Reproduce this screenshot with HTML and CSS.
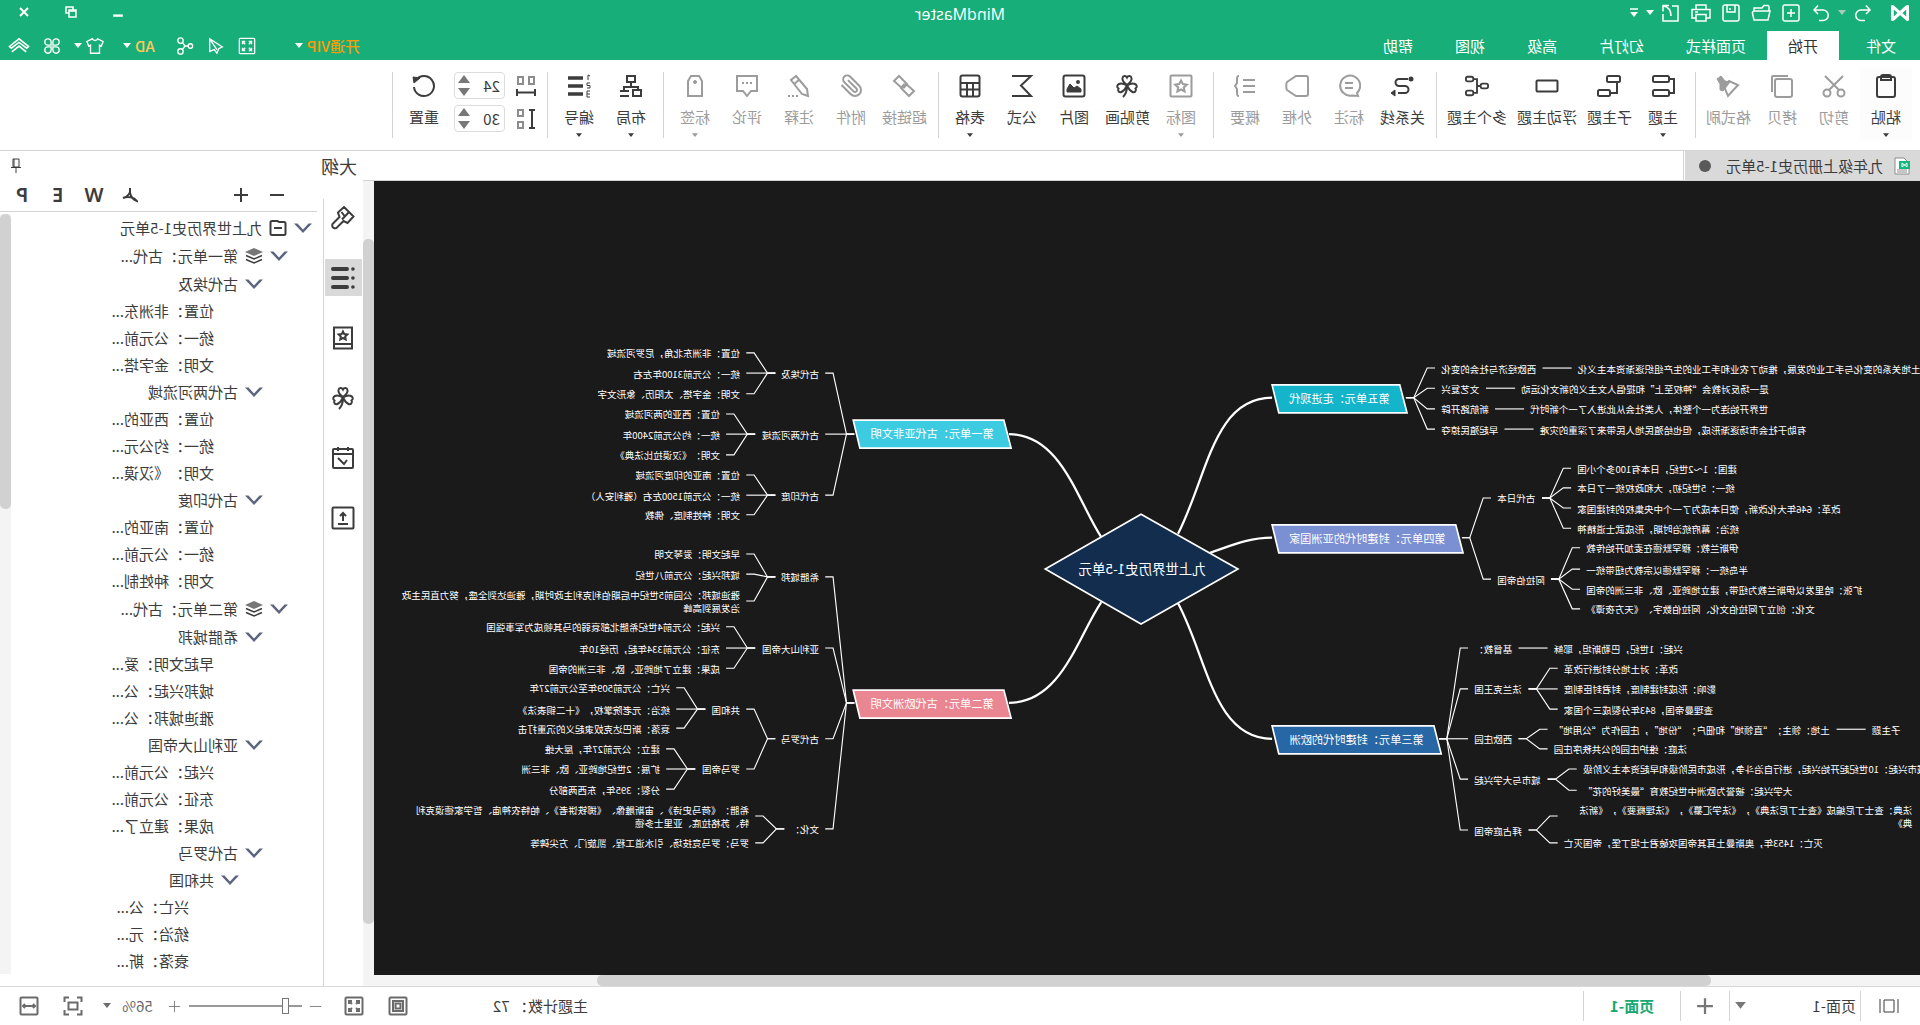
FILE: index.html
```html
<!DOCTYPE html>
<html lang="zh-CN">
<head>
<meta charset="utf-8">
<title>MindMaster</title>
<link rel="stylesheet" href="styles.css">
</head>
<body>
<svg class="sprite" aria-hidden="true">
  <symbol id="i-logo" viewBox="0 0 20 18"><path d="M1 2.500a1.500 1.500 0 0 1 2.500-1.200L10 7l6.500-5.700A1.500 1.500 0 0 1 19 2.500v13a1.500 1.500 0 0 1-2.500 1.200L10 11l-6.500 5.700A1.500 1.500 0 0 1 1 15.500z" fill="currentColor" stroke="none"/><path d="M3.800 5.500v7l3.800-3.500zM16.200 5.500v7l-3.800-3.500z" fill="#17ae79" stroke="none"/><path d="M3 2.500l14 13" stroke-width="3"/></symbol>
  <symbol id="i-undo" viewBox="0 0 20 20"><path d="M7 2.500L3 7l4 4M3.500 7H12a5 5 0 0 1 0 10.500H8"/></symbol>
  <symbol id="i-redo" viewBox="0 0 20 20"><path d="M13 2.500L17 7l-4 4M16.500 7H8a5 5 0 0 0 0 10.500h4"/></symbol>
  <symbol id="i-new" viewBox="0 0 20 20"><rect x="2" y="2" width="16" height="16" rx="2"/><path d="M10 6v8M6 10h8"/></symbol>
  <symbol id="i-open" viewBox="0 0 20 20"><path d="M2 8V4a1.500 1.500 0 0 1 1.500-1.500H7L9 5h8v3M1 8h15.500a2 2 0 0 1 2 2.500L17 17H3z"/></symbol>
  <symbol id="i-save" viewBox="0 0 20 20"><rect x="2" y="2" width="16" height="16" rx="2"/><path d="M6 2v7h8V2M11 5v2"/></symbol>
  <symbol id="i-print" viewBox="0 0 20 20"><path d="M5 6V2h10v4M5 15H1V6.500h18V15h-4M5 11.500h10V18H5zM13 9h3"/></symbol>
  <symbol id="i-export" viewBox="0 0 20 20"><path d="M9 3H3v15h15v-7M12 2.500h6v6M17.500 3C12 4 10 8 10 13"/></symbol>
  <symbol id="i-caret" viewBox="0 0 8 6"><path d="M0 0h8L4 5z" fill="currentColor" stroke="none"/></symbol>
  <symbol id="i-custom" viewBox="0 0 8 10"><path d="M0 1h8" /><path d="M0 4h8L4 9z" fill="currentColor" stroke="none"/></symbol>
  <symbol id="i-min" viewBox="0 0 10 10"><path d="M1 8h8" stroke-width="2"/></symbol>
  <symbol id="i-restore" viewBox="0 0 12 12"><path d="M4 4V1h7v6H8M1 4h7v7H1z"/><path d="M1 5h7"/></symbol>
  <symbol id="i-close" viewBox="0 0 12 12"><path d="M2 2l8 8M10 2l-8 8" stroke-width="2"/></symbol>
  <symbol id="i-full" viewBox="0 0 20 20"><rect x="1.500" y="1.500" width="17" height="17" rx="1"/><path d="M5 8V5h3M5 5l3 3M12 5h3v3M15 5l-3 3M5 12v3h3M5 15l3-3M15 12v3h-3M15 15l-3-3"/></symbol>
  <symbol id="i-send" viewBox="0 0 20 20"><path d="M17 2L3 11l4 2 2 5 3-4 5 2zM17 2L9 14"/></symbol>
  <symbol id="i-share" viewBox="0 0 20 20"><circle cx="4" cy="10" r="2.500"/><circle cx="15" cy="4" r="3"/><circle cx="15" cy="16" r="3"/><path d="M6.500 10H10l3-4M10 10l3 4"/></symbol>
  <symbol id="i-shirt" viewBox="0 0 20 20"><path d="M7 2L1 5l2 5 2-1v9h10V9l2 1 2-5-6-3c-1 2.500-5 2.500-6 0z"/></symbol>
  <symbol id="i-apps" viewBox="0 0 20 20"><path d="M9 9H5.500A3.500 3.500 0 1 1 9 5.500zM11 9h3.500A3.500 3.500 0 1 0 11 5.500zM9 11H5.500A3.500 3.500 0 1 0 9 14.500zM11 11h3.500A3.500 3.500 0 1 1 11 14.500z"/></symbol>
  <symbol id="i-up" viewBox="0 0 24 20"><path d="M1.500 10.500L12 2l10.500 8.500-2 2L12 6l-8.500 6.500zM4 16.500L12 10l8 6.500" stroke-width="1.800"/></symbol>

  <symbol id="i-paste" viewBox="0 0 24 24"><rect x="3" y="3" width="18" height="20" rx="2"/><path d="M7 3c0-1 1-2 2-2h6c1 0 2 1 2 2v3H7z"/></symbol>
  <symbol id="i-cut" viewBox="0 0 24 24"><circle cx="5" cy="19" r="3.500"/><circle cx="19" cy="19" r="3.500"/><path d="M3 2l14 14M21 2L7 16"/></symbol>
  <symbol id="i-copy" viewBox="0 0 24 24"><rect x="2" y="5" width="17" height="18" rx="2"/><path d="M6 2h15a1 1 0 0 1 1 1v15"/></symbol>
  <symbol id="i-brush" viewBox="0 0 24 24"><path d="M2 11l10 11 4-10-5-5z"/><path d="M10 8l5-1 4-5 4 3-3 5v6l-3 1z" fill="currentColor" stroke-width="1"/></symbol>
  <symbol id="i-topic" viewBox="0 0 24 24"><rect x="6" y="2" width="16" height="6" rx="1.500"/><rect x="6" y="16" width="16" height="6" rx="1.500"/><path d="M6 5H1v14h5"/></symbol>
  <symbol id="i-sub" viewBox="0 0 24 24"><rect x="1" y="2" width="13" height="6" rx="1.500"/><rect x="11" y="16" width="12" height="6" rx="1.500"/><path d="M4 8v11h7"/></symbol>
  <symbol id="i-float" viewBox="0 0 24 24"><rect x="1.500" y="6.500" width="21" height="11" rx="1"/></symbol>
  <symbol id="i-multi" viewBox="0 0 26 24"><rect x="1" y="9.500" width="8" height="5" rx="2"/><rect x="17" y="2" width="8" height="5" rx="2"/><rect x="17" y="17" width="8" height="5" rx="2"/><path d="M9 12h4M17 4.500h-4v15h4"/></symbol>
  <symbol id="i-rel" viewBox="0 0 24 24"><circle cx="3" cy="5" r="1.500" fill="currentColor"/><path d="M18 5H9a3.500 3.500 0 0 0 0 7h6a3.500 3.500 0 0 1 0 7H8" transform="translate(24 0) scale(-1 1)"/><path d="M19 16l4 3-4 3z" fill="currentColor" stroke-width="1"/></symbol>
  <symbol id="i-call" viewBox="0 0 24 24"><path d="M4 19a10 10 0 1 1 5 2.500L3 22z"/><path d="M8 9h8M8 14h8"/></symbol>
  <symbol id="i-frame" viewBox="0 0 24 24"><path d="M3 2h10l9 6c1 1 1 7 0 8l-9 6H3a2 2 0 0 1-2-2V4a2 2 0 0 1 2-2z"/></symbol>
  <symbol id="i-brace" viewBox="0 0 24 24"><path d="M2 6h12M2 12h12M2 18h12M18 2c2 0 2 1 2 3v4l2 3-2 3v4c0 2 0 3-2 3"/></symbol>
  <symbol id="i-mark" viewBox="0 0 24 24"><rect x="1.500" y="1.500" width="21" height="21" rx="1"/><path d="M12 6.500l1.800 3.500 4 .6-3 2.800.8 4-3.600-1.900-3.600 1.900.8-4-3-2.800 4-.6z"/></symbol>
  <symbol id="i-clover" viewBox="0 0 24 24"><path d="M12 11C8 8 7 6 7.500 4 8 1.500 11 1.500 12 3.500c1-2 4-2 4.500.5.500 2-.500 4-4.500 7zM12 11.500c-4-2.500-6-2.500-8-1.500s-2.500 3-.5 4.500C2 17 4.500 19 6.500 18s4-3 5.500-6.500zM12 11.500c4-2.500 6-2.500 8-1.500s2.500 3 .5 4.500C22 17 19.500 19 17.500 18s-4-3-5.500-6.500zM12 12c0 4 1 8 4 11"/></symbol>
  <symbol id="i-image" viewBox="0 0 24 24"><rect x="1.500" y="1.500" width="21" height="21" rx="2"/><path d="M5 18v-3l4-3 3 2 4-4 3 5v3z" fill="currentColor" stroke-width="1"/><circle cx="8" cy="8" r="1" fill="currentColor"/></symbol>
  <symbol id="i-sigma" viewBox="0 0 24 24"><path d="M22 2H3l10 9.500L3 22h19"/></symbol>
  <symbol id="i-table" viewBox="0 0 24 24"><rect x="2.500" y="1.500" width="19" height="21" rx="2"/><path d="M3 9h18M3 15.500h18M9 9v13M15 9v13"/></symbol>
  <symbol id="i-link" viewBox="0 0 24 24"><path d="M13 15l9-8-5-5-8 8 3.500 4M11 9l-9 8 5 5 8-8-3.500-4"/></symbol>
  <symbol id="i-clip" viewBox="0 0 24 24"><path d="M21.440 11.050l-9.190 9.190a6 6 0 0 1-8.490-8.490l9.190-9.190a4 4 0 0 1 5.660 5.660l-9.200 9.190a2 2 0 0 1-2.830-2.830l8.490-8.480"/></symbol>
  <symbol id="i-note" viewBox="0 0 24 24"><path d="M15 2l5 4L9 20l-6 2 1-7zM12 6l5 4" /><path d="M13 22h2M17 22h2M21 22h2"/></symbol>
  <symbol id="i-comment" viewBox="0 0 24 24"><path d="M2 2h20v15h-6l-4 5-4-5H2zM7 9h2M11 9h2M15 9h2"/></symbol>
  <symbol id="i-tag" viewBox="0 0 24 24"><path d="M5 22V7l3-5h8l3 5v15z"/><circle cx="12" cy="8" r="1.500" fill="currentColor" stroke-width="1"/></symbol>
  <symbol id="i-layout" viewBox="0 0 24 24"><path d="M8 2h8v6H8zM12 8v5M5 16v-3h14v3M2 16h8v6H2zM14 17h9M14 22h9"/></symbol>
  <symbol id="i-number" viewBox="0 0 24 24"><path d="M8 4h15M8 12h15M8 20h15" stroke-width="3.500"/><path d="M1 2l2-1v5M1 9h3v2.500H1V14h3M1 17h3v6H1M1 20h3" stroke-width="1"/></symbol>
  <symbol id="i-hgap" viewBox="0 0 20 22"><path d="M2 2h5v7H2zM13 2h5v7h-5z" stroke="#8c8c8c"/><path d="M1 14v7M19 14v7M1 17.500h18"/></symbol>
  <symbol id="i-vgap" viewBox="0 0 20 22"><path d="M13 2h5v6h-5zM13 14h5v6h-5z" stroke="#8c8c8c"/><path d="M1 2h6M1 20h6M4 2v18"/></symbol>
  <symbol id="i-reset" viewBox="0 0 24 24"><path d="M4 6a10 10 0 1 1-2 7" transform="translate(24 0) scale(-1 1)"/><path d="M16 4l7-1-1 6z" fill="currentColor" stroke-width="1"/></symbol>

  <symbol id="i-doc" viewBox="0 0 16 18"><path d="M6 1h9v16H1V6z" fill="#fff" stroke="#8c8c8c"/><path d="M3 13h10M3 15h10" stroke="#8c8c8c"/><rect x="0" y="4" width="11" height="8" fill="#10b87c" stroke="none"/><path d="M3 10V6l5 4V6z" stroke="#fff"/></symbol>
  <symbol id="i-pin" viewBox="0 0 12 16"><path d="M3 1h6v8H3zM1 9.500h10M6 10v5M8 1v8"/></symbol>
  <symbol id="i-paint" viewBox="0 0 24 24"><path d="M11 1L1.500 10.500l6 6.500 4-2 7 7c3 1 5-1 4-4l-7-7 1.500-4.500zM6 6l7 7.500M10.500 10l3-4"/></symbol>
  <symbol id="i-list" viewBox="0 0 24 24"><path d="M8 3h14M8 12h14M8 21h14" stroke-width="4" stroke-linecap="round"/><path d="M2 3h.1M2 12h.1M2 21h.1" stroke-width="3.500" stroke-linecap="round"/></symbol>
  <symbol id="i-book" viewBox="0 0 24 24"><path d="M3 1.500h18v21H3zM3 18h18"/><path d="M12 5.500l1.300 2.600 3 .4-2.100 2 .5 2.900-2.700-1.400-2.700 1.400.5-2.900-2.100-2 3-.4z"/></symbol>
  <symbol id="i-calendar" viewBox="0 0 24 24"><rect x="2" y="3" width="20" height="19" rx="1"/><path d="M2 8h20M7 1v4M17 1v4M17 12l-6 6-3-4"/></symbol>
  <symbol id="i-upload" viewBox="0 0 24 24"><rect x="1.500" y="1.500" width="21" height="21" rx="1"/><path d="M7 18h10M12 15V8M9 10l3-3 3 3"/></symbol>
  <symbol id="i-minus" viewBox="0 0 16 16"><path d="M1 8h14"/></symbol>
  <symbol id="i-plus" viewBox="0 0 16 16"><path d="M1 8h14M8 1v14"/></symbol>
  <symbol id="i-pdf" viewBox="0 0 16 16"><path d="M8 1v5c-1 4-4 7-7 8 3-4 9-5 14-3-3-1-6-3-7-6"/></symbol>
  <symbol id="i-chev" viewBox="0 0 18 12"><path d="M0 1.500h3.500L9 7.500l5.500-6H18L9 11z" fill="#5c6580" stroke="none"/></symbol>
  <symbol id="i-folder" viewBox="0 0 18 16"><path d="M1.500 3.500c0-1 .5-1.500 1.500-1.500h5l1.500-1H15c1 0 1.500.5 1.500 1.500v11c0 1-.5 1.500-1.500 1.500H3c-1 0-1.500-.5-1.500-1.500zM5 8h8"/></symbol>
  <symbol id="i-layers" viewBox="0 0 18 16"><path d="M9 0l9 4-9 4-9-4z" fill="#777" stroke="none"/><path d="M1 7.500L9 11l8-3.500M1 11.500L9 15l8-3.500" stroke-width="1.500"/></symbol>

  <symbol id="i-panel" viewBox="0 0 20 14"><path d="M1 0v14M5 1h10v12H5zM19 0v14"/></symbol>
  <symbol id="i-page" viewBox="0 0 20 20"><rect x="1.500" y="1.500" width="17" height="17" rx="1"/><path d="M5 5h10v10H5zM7.500 7.500h5v5h-5z"/></symbol>
  <symbol id="i-focus" viewBox="0 0 20 20"><path d="M1.500 6V1.500H6M14 1.500h4.500V6M18.500 14v4.500H14M6 18.500H1.500V14M5.500 6.500h9v7h-9z"/></symbol>
  <symbol id="i-fitw" viewBox="0 0 20 20"><rect x="1.500" y="1.500" width="17" height="17" rx="1"/><path d="M4 10h12M6 8l-2 2 2 2M14 8l2 2-2 2"/></symbol>
</svg>

<div class="app">
  <header class="top">
    <div class="titlebar">
      <div class="quick">
        <svg class="logo"><use href="#i-logo"/></svg>
        <button class="tb" aria-label="撤销"><svg><use href="#i-undo"/></svg></button>
        <button class="tb dim" aria-label="撤销列表"><svg class="caret"><use href="#i-caret"/></svg></button>
        <button class="tb" aria-label="重做"><svg><use href="#i-redo"/></svg></button>
        <button class="tb" aria-label="新建"><svg><use href="#i-new"/></svg></button>
        <button class="tb" aria-label="打开"><svg><use href="#i-open"/></svg></button>
        <button class="tb" aria-label="保存"><svg><use href="#i-save"/></svg></button>
        <button class="tb" aria-label="打印"><svg><use href="#i-print"/></svg></button>
        <button class="tb" aria-label="导出"><svg><use href="#i-export"/></svg></button>
        <button class="tb" aria-label="导出列表"><svg class="caret"><use href="#i-caret"/></svg></button>
        <button class="tb" aria-label="自定义"><svg class="custom"><use href="#i-custom"/></svg></button>
      </div>
      <h1 class="title">MindMaster</h1>
      <div class="window">
        <button aria-label="最小化"><svg><use href="#i-min"/></svg></button>
        <button aria-label="还原"><svg><use href="#i-restore"/></svg></button>
        <button aria-label="关闭"><svg><use href="#i-close"/></svg></button>
      </div>
    </div>
    <nav class="menubar">
      <a class="menu file" href="#">文件</a>
      <a class="menu on" href="#">开始</a>
      <a class="menu" href="#">页面样式</a>
      <a class="menu" href="#">幻灯片</a>
      <a class="menu" href="#">高级</a>
      <a class="menu" href="#">视图</a>
      <a class="menu" href="#">帮助</a>
      <div class="account">
        <button class="vip">开通VIP<svg class="caret white"><use href="#i-caret"/></svg></button>
        <button aria-label="全屏"><svg><use href="#i-full"/></svg></button>
        <button aria-label="发送"><svg><use href="#i-send"/></svg></button>
        <button aria-label="分享"><svg><use href="#i-share"/></svg></button>
        <button class="user">AD<svg class="caret white"><use href="#i-caret"/></svg></button>
        <button class="skin" aria-label="皮肤"><svg><use href="#i-shirt"/></svg><svg class="caret"><use href="#i-caret"/></svg></button>
        <button aria-label="应用"><svg><use href="#i-apps"/></svg></button>
        <button aria-label="收起"><svg class="wide"><use href="#i-up"/></svg></button>
      </div>
    </nav>
  </header>

  <div class="ribbon">
    <div class="group">
      <button class="cmd hot"><svg><use href="#i-paste"/></svg>粘贴<svg class="drop"><use href="#i-caret"/></svg></button>
      <button class="cmd off"><svg><use href="#i-cut"/></svg>剪切</button>
      <button class="cmd off"><svg><use href="#i-copy"/></svg>拷贝</button>
      <button class="cmd off"><svg><use href="#i-brush"/></svg>格式刷</button>
    </div>
    <div class="group">
      <button class="cmd"><svg><use href="#i-topic"/></svg>主题<svg class="drop"><use href="#i-caret"/></svg></button>
      <button class="cmd"><svg><use href="#i-sub"/></svg>子主题</button>
      <button class="cmd"><svg><use href="#i-float"/></svg>浮动主题</button>
      <button class="cmd"><svg><use href="#i-multi"/></svg>多个主题</button>
    </div>
    <div class="group">
      <button class="cmd"><svg><use href="#i-rel"/></svg>关系线</button>
      <button class="cmd off"><svg><use href="#i-call"/></svg>标注</button>
      <button class="cmd off"><svg><use href="#i-frame"/></svg>外框</button>
      <button class="cmd off"><svg><use href="#i-brace"/></svg>概要</button>
    </div>
    <div class="group">
      <button class="cmd off"><svg><use href="#i-mark"/></svg>图标<svg class="drop"><use href="#i-caret"/></svg></button>
      <button class="cmd"><svg><use href="#i-clover"/></svg>剪贴画</button>
      <button class="cmd"><svg><use href="#i-image"/></svg>图片</button>
      <button class="cmd"><svg><use href="#i-sigma"/></svg>公式</button>
      <button class="cmd"><svg><use href="#i-table"/></svg>表格<svg class="drop"><use href="#i-caret"/></svg></button>
    </div>
    <div class="group">
      <button class="cmd off"><svg><use href="#i-link"/></svg>超链接</button>
      <button class="cmd off"><svg><use href="#i-clip"/></svg>附件</button>
      <button class="cmd off"><svg><use href="#i-note"/></svg>注释</button>
      <button class="cmd off"><svg><use href="#i-comment"/></svg>评论</button>
      <button class="cmd off"><svg><use href="#i-tag"/></svg>标签<svg class="drop"><use href="#i-caret"/></svg></button>
    </div>
    <div class="group">
      <button class="cmd"><svg><use href="#i-layout"/></svg>布局<svg class="drop"><use href="#i-caret"/></svg></button>
      <button class="cmd"><svg><use href="#i-number"/></svg>编号<svg class="drop"><use href="#i-caret"/></svg></button>
    </div>
    <div class="group">
      <div class="gaps">
        <label class="gap"><svg><use href="#i-hgap"/></svg><span class="spin"><input type="text" value="24" aria-label="水平间距"><span class="arrows"><i class="up"></i><i class="down"></i></span></span></label>
        <label class="gap"><svg><use href="#i-vgap"/></svg><span class="spin"><input type="text" value="30" aria-label="垂直间距"><span class="arrows"><i class="up"></i><i class="down"></i></span></span></label>
      </div>
      <button class="cmd"><svg><use href="#i-reset"/></svg>重置</button>
    </div>
  </div>

  <main class="work">
    <section class="editor">
      <div class="tabs">
        <button class="doc"><svg><use href="#i-doc"/></svg>九年级上册历史1-5单元<span class="dot"></span></button>
      </div>
      <div class="stage">
        <div class="canvas"><svg id="map" width="1546" height="794"></svg></div>
        <div class="vbar"><div class="thumb"></div></div>
      </div>
      <div class="hbar"><div class="thumb"></div></div>
    </section>
    <aside class="side">
      <div class="sidehead"><h2>大纲</h2><button aria-label="固定"><svg><use href="#i-pin"/></svg></button></div>
      <div class="sidebody">
        <div class="rail">
          <button aria-label="样式"><svg><use href="#i-paint"/></svg></button>
          <button class="on" aria-label="大纲"><svg><use href="#i-list"/></svg></button>
          <button aria-label="图标"><svg><use href="#i-book"/></svg></button>
          <button aria-label="剪贴画"><svg><use href="#i-clover"/></svg></button>
          <button aria-label="任务"><svg><use href="#i-calendar"/></svg></button>
          <button aria-label="导出"><svg><use href="#i-upload"/></svg></button>
        </div>
        <div class="outline">
          <div class="tools">
            <button aria-label="折叠"><svg><use href="#i-minus"/></svg></button>
            <button aria-label="展开"><svg><use href="#i-plus"/></svg></button>
            <button class="push" aria-label="导出 PDF"><svg><use href="#i-pdf"/></svg></button>
            <button>W</button>
            <button>E</button>
            <button>P</button>
          </div>
          <div class="treewrap">
            <ul class="tree">
              <li class="l1"><svg class="chev"><use href="#i-chev"/></svg><svg class="kind"><use href="#i-folder"/></svg>九上世界历史1-5单元</li>
              <li class="l2"><svg class="chev"><use href="#i-chev"/></svg><svg class="kind"><use href="#i-layers"/></svg>第一单元：古代...</li>
              <li class="l3"><svg class="chev"><use href="#i-chev"/></svg>古代埃及</li>
              <li class="l4">位置：非洲东...</li>
              <li class="l4">统一：公元前...</li>
              <li class="l4">文明：金字塔...</li>
              <li class="l3"><svg class="chev"><use href="#i-chev"/></svg>古代两河流域</li>
              <li class="l4">位置：西亚的...</li>
              <li class="l4">统一：约公元...</li>
              <li class="l4">文明：《汉谟...</li>
              <li class="l3"><svg class="chev"><use href="#i-chev"/></svg>古代印度</li>
              <li class="l4">位置：南亚的...</li>
              <li class="l4">统一：公元前...</li>
              <li class="l4">文明：种姓制...</li>
              <li class="l2"><svg class="chev"><use href="#i-chev"/></svg><svg class="kind"><use href="#i-layers"/></svg>第二单元：古代...</li>
              <li class="l3"><svg class="chev"><use href="#i-chev"/></svg>希腊城邦</li>
              <li class="l4">早起文明：爱...</li>
              <li class="l4">城邦兴起：公...</li>
              <li class="l4">雅迪城邦：公...</li>
              <li class="l3"><svg class="chev"><use href="#i-chev"/></svg>亚利山大帝国</li>
              <li class="l4">兴起：公元前...</li>
              <li class="l4">东征：公元前...</li>
              <li class="l4">成果：建立了...</li>
              <li class="l3"><svg class="chev"><use href="#i-chev"/></svg>古代罗马</li>
              <li class="l4 open"><svg class="chev"><use href="#i-chev"/></svg>共和国</li>
              <li class="l5">兴亡：公...</li>
              <li class="l5">统治：元...</li>
              <li class="l5">衰落：斯...</li>
            </ul>
            <div class="treebar"><div class="thumb"></div></div>
          </div>
        </div>
      </div>
    </aside>
  </main>

  <footer class="status">
    <button class="panel" aria-label="页面面板"><svg><use href="#i-panel"/></svg></button>
    <select class="pages" aria-label="页面"><option>页面-1</option></select>
    <svg class="pick"><use href="#i-caret"/></svg>
    <button class="add" aria-label="添加页面"><svg><use href="#i-plus"/></svg></button>
    <button class="current">页面-1</button>
    <span class="count">主题计数：&nbsp;72</span>
    <div class="view">
      <button aria-label="整页"><svg><use href="#i-page"/></svg></button>
      <button aria-label="全屏"><svg><use href="#i-full"/></svg></button>
      <button class="step" aria-label="缩小"><svg><use href="#i-minus"/></svg></button>
      <input class="zoom" type="range" min="0" max="100" value="12" aria-label="缩放">
      <button class="step in" aria-label="放大"><svg><use href="#i-plus"/></svg></button>
      <button class="percent">56%<svg class="caret"><use href="#i-caret"/></svg></button>
      <button aria-label="聚焦"><svg><use href="#i-focus"/></svg></button>
      <button aria-label="适合宽度"><svg><use href="#i-fitw"/></svg></button>
    </div>
  </footer>
</div>
<script src="map.js"></script>
</body>
</html>
```
FILE: map.js
```js
// Draws the mind map. Positions are view pixels; the drawing itself is in
// document units, shown at the current zoom.
const ZOOM = 0.56;
const TOP = 181;
const NS = 'http://www.w3.org/2000/svg';
const doc = v => Math.round(v / ZOOM);
const docY = v => Math.round((v - TOP) / ZOOM);

const root = document.createElementNS(NS, 'g');
root.setAttribute('transform', `scale(${ZOOM})`);
document.getElementById('map').append(root);

function add(tag, attrs, text) {
  const el = document.createElementNS(NS, tag);
  for (const k in attrs) el.setAttribute(k, attrs[k]);
  if (text) el.textContent = text;
  root.append(el);
}

function label(x, y, text, cls) {
  add('text', { x: doc(x), y: docY(y) + 8, class: cls }, text);
}

// node: [y, text, x of the children, children]
function branch(side, parentY, x, nodes) {
  const at = n => doc(x) - side * n;
  nodes.forEach(([y, text, childX, children]) => {
    const py = docY(parentY), cy = docY(y);
    add('path', { class: 'twig', d: `M${at(63)} ${py}H${at(49)}L${at(25)} ${cy}H${at(11)}` });
    const cls = 'leaf ' + (side < 0 ? 'end' : 'start');
    const lines = text.split('\n');
    if (lines.length === 1) label(x, y, text, cls);
    else lines.forEach((line, i) =>
      label(side < 0 ? x - 348 : x, y - 6 + i * 13, line, 'leaf start'));
    if (children) branch(side, y, childX, children);
  });
}

function curve(d) {
  const p = d.map(([x, y]) => `${doc(x)} ${docY(y)}`);
  add('path', { class: 'limb', d: `M${p[0]}C${p[1]} ${p[2]} ${p[3]}` });
}

function unit(left, right, top, color, text) {
  const pts = [[left + 7, top], [right, top], [right - 7, top + 28], [left, top + 28]];
  add('polygon', { class: 'box', fill: color, points: pts.map(([x, y]) => `${doc(x)},${docY(y)}`).join(' ') });
  add('text', { class: 'unit', x: doc((left + right) / 2), y: docY(top + 14) + 7 }, text);
}

curve([[742, 534], [713, 477], [707, 398], [648, 398]]);
curve([[710, 553], [690, 546], [672, 538], [648, 538]]);
curve([[742, 603], [713, 657], [707, 739], [648, 739]]);
curve([[819, 537], [843, 500], [859, 434], [911, 434]]);
curve([[819, 602], [843, 638], [859, 703], [911, 703]]);

add('polygon', { class: 'box', fill: '#132d4f', points: [[682, 569], [779, 514], [875, 569], [779, 624]].map(([x, y]) => `${doc(x)},${docY(y)}`).join(' ') });
add('text', { class: 'center', x: doc(778), y: docY(569) + 9 }, '九上世界历史1-5单元');

unit(513, 648, 385, '#14b4cb', '第五单元：走进现代');
unit(457, 648, 525, '#7b8fd3', '第四单元：封建时代的亚洲国家');
unit(479, 648, 726, '#2767a6', '第三单元：封建时代的欧洲');
unit(909, 1067, 420, '#3dcbe1', '第一单元：古代亚非文明');
unit(909, 1067, 690, '#ea8592', '第二单元：古代欧洲文明');

branch(-1, 398, 479, [
  [368, '西欧经济与社会的变化', 342, [[368, '土地关系的变化与手工业的发展，推动了农业和手工业的生产组织逐渐资本主义化']]],
  [388, '文艺复兴', 399, [[388, '是一场反对教会“神权至上”和提倡人文主义的新文化运动']]],
  [409, '新航路开辟', 390, [[409, '世界开始连为一个整体，人类社会从此进入了一个新时代']]],
  [429, '早起殖民掠夺', 380, [[429, '有助于社会市场逐渐形成，但也给殖民地人民带来了深重的灾难']]]
]);
branch(-1, 538, 423, [
  [498, '古代日本', 343, [
    [468, '建国：1～2世纪，日本有100多个小国'],
    [488, '统一：5世纪初，大和政权统一了日本'],
    [508, '改革：646年大化改新，使日本成为了一个中央集权的封建国家'],
    [528, '统治：幕府统治时期，形成武士道精神']]],
  [579, '阿拉伯帝国', 334, [
    [548, '伊斯兰教：穆罕默德在麦加开始传教'],
    [569, '半岛统一：穆罕默德以宗教为纽带统一'],
    [589, '扩张：哈里发以伊斯兰教为纽带，建立地跨亚、欧、非三洲的帝国'],
    [609, '文化：创立了阿拉伯文化、阿拉伯数字、《天方夜谭》']]]
]);
branch(-1, 739, 446, [
  [648, '基督教：', 366, [[648, '兴起：1世纪，巴勒斯坦，耶稣']]],
  [689, '法兰克王国', 356, [
    [668, '改革：对土地分封进行改革'],
    [689, '影响：形成封建制度，封君封臣制度'],
    [709, '查理曼帝国，843年分裂成三个国家']]],
  [739, '西欧庄园', 366, [
    [729, '土地：领主；“直领地”和佃户；“份地”，庄园作为“公用地”', 48, [[729, '子主题']]],
    [749, '法庭：维护庄园的公共秩序庄园']]],
  [779, '城市与大学兴起', 337, [
    [769, '城市兴起：10世纪起开始兴起，进行自治斗争，形成市民阶级和早起资本主义阶级'],
    [790, '大学兴起：被誉为欧洲中世纪教育“最美好的花”']]],
  [830, '拜占庭帝国', 356, [
    [816, '法典：查士丁尼编成《查士丁尼法典》，《法学汇纂》，《法理概要》，《新法\n典》'],
    [843, '灭亡：1453年，奥斯曼土耳其帝国攻破君士坦丁堡，帝国灭亡']]]
]);
branch(1, 434, 1101, [
  [373, '古代埃及', 1180, [
    [353, '位置：非洲东北角，尼罗河流域'],
    [373, '统一：公元前3100年左右'],
    [394, '文明：金字塔、太阳历、象形文字']]],
  [434, '古代两河流域', 1200, [
    [414, '位置：西亚的两河流域'],
    [434, '统一：约公元前2400年'],
    [455, '文明：《汉谟拉比法典》']]],
  [495, '古代印度', 1180, [
    [475, '位置：南亚的印度河流域'],
    [495, '统一：公元前1500左右（雅利安人）'],
    [515, '文明：种姓制度、佛教']]]
]);
branch(1, 703, 1101, [
  [577, '希腊城邦', 1180, [
    [554, '早起文明：爱琴文明'],
    [574, '城邦兴起：公元前八世纪'],
    [601, '雅迪城邦：公园前5世纪中后期伯利克利主政时期，雅迪达到全盛，努力直民主政\n治发展到高峰']]],
  [648, '亚利山大帝国', 1200, [
    [627, '兴起：公元前4世纪希腊北部衰弱的马其顿成为军事强国'],
    [648, '东征：公元前334年起，历经10年'],
    [668, '成果：建立了地跨亚、欧、非三洲的帝国']]],
  [739, '古代罗马', 1180, [
    [709, '共和国', 1250, [
      [688, '兴亡：公元前509年至公元前27年'],
      [709, '统治：元老院掌权，《十二铜表法》'],
      [728, '衰落：斯巴达克奴隶起义的沉重打击']]],
    [769, '罗马帝国', 1260, [
      [749, '建立：公元前27年，屋大维'],
      [769, '扩展：2世纪地跨亚、欧、非三洲'],
      [789, '分裂：395年，东西两部分']]]]],
  [829, '文化：', 1171, [
    [816, '希腊：《荷马史诗》、宙斯雕像、《掷铁饼者》、帕特农神庙、哲学家德谟克利\n特、苏格拉底、亚里士多德'],
    [843, '罗马：罗马竞技场、引水道工程、凯旋门、方尖碑等']]]
]);
```
FILE: styles.css
```css
* { box-sizing: border-box; }

body {
  margin: 0;
  font: 15px/20px "Noto Sans CJK SC", "Noto Sans", sans-serif;
  text-spacing-trim: space-all;
  color: #3c3c3c;
  overflow: hidden;
}

.sprite { display: none; }

button, select, input { font: inherit; color: inherit; }
button { border: 0; padding: 0; background: none; display: flex; align-items: center; justify-content: center; }
svg { display: block; flex: none; fill: none; stroke: currentColor; }

/* The whole interface is shown mirrored, right to left. */
.app {
  height: 100vh;
  display: flex;
  flex-direction: column;
  background: #fff;
  transform: scaleX(-1);
}

/* title bar */
.top { background: #17ae79; color: #fff; }
.titlebar { height: 31px; display: grid; grid-template-columns: 1fr auto 1fr; align-items: center; }
.quick { display: flex; align-items: center; padding: 0 0 6px 10px; }
.logo { width: 20px; height: 18px; margin-right: 12px; }
.tb { width: 30px; height: 20px; }
.tb svg { width: 20px; height: 20px; stroke-width: 1.5; }
.tb .caret, .caret { width: 8px; height: 6px; }
.tb .custom { width: 8px; height: 10px; }
.tb:has(.caret) { width: 12px; }
.tb:has(.custom) { width: 20px; }
.dim { color: #a9c9b9; }
.title { margin: 0; font: 16px/22px "Open Sans", sans-serif; padding-bottom: 4px; }
.window { justify-self: end; display: flex; padding: 0 18px 8px 0; gap: 35px; }
.window button { width: 12px; height: 12px; }
.window svg { width: 12px; height: 12px; stroke-width: 1.5; }

/* menu tabs */
.menubar { height: 29px; display: flex; }
.menu { padding: 5px 21px 4px; color: #fff; text-decoration: none; }
.menu.file { padding-left: 24px; padding-right: 27px; }
.menu.on { background: #fff; color: #333; }
.account { margin-left: auto; display: flex; align-items: center; gap: 13px; padding-right: 8px; }
.account svg { width: 18px; height: 18px; stroke-width: 1.5; }
.account .wide { width: 22px; }
.account .caret { width: 8px; height: 6px; margin-left: 4px; }
.account .white { color: #fff; }
.vip { color: #ff9a05; font-weight: 500; margin-right: 26px; }
.user { color: #ffc75c; font-weight: 500; margin-left: 8px; }
.skin { margin-left: 6px; }

/* ribbon */
.ribbon { height: 91px; display: flex; padding: 8px 0 0 8px; border-bottom: 1px solid #d4d4d4; }
.group { display: flex; height: 72px; position: relative; padding-right: 6px; margin-right: 6px; }
.group::after { content: ""; width: 1px; height: 66px; background: #d4d4d4; position: absolute; right: 0; top: 4px; }
.cmd { min-width: 52px; height: 72px; padding: 6px 5px 0; flex-direction: column; justify-content: flex-start; gap: 9px; white-space: nowrap; }
.cmd svg { width: 24px; height: 24px; stroke-width: 2; }
.cmd .drop { width: 6px; height: 5px; margin-top: -3px; }
.cmd.hot { background: #fcfcfc; }
.cmd.off { color: #9c9c9c; }
.gaps { padding: 4px 4px 0 5px; display: grid; grid-template-rows: 27px 27px; row-gap: 6px; align-content: start; }
.gap { display: flex; align-items: center; gap: 11px; }
.gap svg { width: 20px; height: 22px; stroke-width: 2; }
.spin { display: flex; width: 51px; height: 27px; border: 1px solid #dcdcdc; border-radius: 4px; align-items: center; }
.spin input { width: 34px; border: 0; padding: 0 0 0 4px; background: none; outline: 0; }
.arrows { display: grid; gap: 5px; }
.up, .down { border: 6px solid transparent; width: 12px; height: 8px; }
.up { border-width: 0 6px 8px; border-bottom-color: #777; }
.down { border-width: 8px 6px 0; border-top-color: #777; }

/* editor */
.work { flex: 1; min-height: 0; display: flex; }
.editor { flex: 1; min-width: 0; display: flex; flex-direction: column; }
.tabs { height: 30px; display: flex; border-bottom: 1px solid #d4d4d4; }
.doc { background: #d9d9d9; padding: 0 14px 0 10px; gap: 11px; border-right: 1px solid #fff; box-shadow: 1px 0 #d4d4d4; }
.doc svg { width: 16px; height: 18px; stroke-width: 1; }
.dot { width: 12px; height: 12px; border-radius: 50%; background: #595959; margin-left: 4px; }
.stage { flex: 1; min-height: 0; display: flex; }
.canvas { flex: 1; min-width: 0; overflow: hidden; background: #1a1a1a; }
.thumb { background: #d1d1d1; border-radius: 5px; }
.vbar { width: 11px; background: #f4f4f4; padding: 58px 0 51px; display: flex; }
.vbar .thumb { width: 11px; }
.hbar { height: 11px; background: #f4f4f4; padding: 0 234px 0 209px; }
.hbar .thumb { height: 11px; }

#map text { fill: #fff; stroke: none; font-family: "Noto Sans CJK SC", sans-serif; }
#map .leaf { font-size: 17px; }
#map .end { text-anchor: end; }
#map .unit { font-size: 20px; text-anchor: middle; }
#map .center { font-size: 24px; text-anchor: middle; }
.twig { stroke: #fff; stroke-width: 2; }
.limb { stroke: #fff; stroke-width: 4; }
.box { stroke: #fff; stroke-width: 3; }

/* side panel */
.side { width: 363px; display: flex; flex-direction: column; }
.sidehead { height: 48px; padding: 3px 10px 0 6px; display: flex; align-items: flex-start; justify-content: space-between; }
.sidehead h2 { margin: 0; font-size: 18px; line-height: 24px; font-weight: 400; }
.sidehead svg { width: 12px; height: 16px; margin-top: 4px; }
.sidebody { flex: 1; min-height: 0; display: flex; }
.rail { width: 40px; border-right: 1px solid #d4d4d4; padding-left: 1px; display: flex; flex-direction: column; gap: 23px; }
.rail button { width: 37px; height: 37px; }
.rail svg { width: 24px; height: 24px; stroke-width: 2; }
.rail .on { background: #d9d9d9; }
.outline { flex: 1; min-width: 0; display: flex; flex-direction: column; margin-top: -16px; padding-left: 6px; }
.tools { height: 29px; border-bottom: 1px solid #d4d4d4; display: flex; padding: 0 14px 4px 32px; gap: 20px; }
.tools button { width: 16px; font: 600 20px/24px "Noto Sans", sans-serif; }
.tools svg { width: 16px; height: 16px; stroke-width: 2; }
.tools .push { margin-left: auto; }
.treewrap { flex: 1; min-height: 0; display: flex; padding-top: 2px; }
.tree { flex: 1; list-style: none; margin: 0; padding: 0 0 0 5px; }
.tree li { height: 27px; display: flex; align-items: center; gap: 7px; white-space: nowrap; }
.tree .chev { width: 18px; height: 12px; }
.tree .kind { width: 18px; height: 16px; stroke-width: 2; }
.tree .l2 { height: 29px; padding-left: 24px; }
.tree .l3 { padding-left: 49px; }
.tree .l4 { padding-left: 98px; }
.tree .open { padding-left: 73px; }
.tree .l5 { padding-left: 123px; }
.treebar { width: 11px; background: #f4f4f4; margin-bottom: 12px; }
.treebar .thumb { height: 295px; }

/* status bar */
.status { height: 39px; border-top: 1px solid #d9d9d9; display: flex; align-items: center; }
.panel { padding: 0 18px 0 21px; height: 30px; border-right: 1px solid #d4d4d4; }
.panel svg { width: 20px; height: 14px; }
.pages { appearance: none; border: 0; background: none; padding: 0 0 0 4px; width: 114px; }
.pick { width: 11px; height: 8px; color: #777; margin-right: 5px; }
.add { width: 50px; height: 30px; border: 1px solid #d4d4d4; border-width: 0 1px; }
.add svg { width: 18px; height: 18px; stroke: #777; stroke-width: 2; }
.current { width: 97px; height: 30px; border-right: 1px solid #d4d4d4; color: #17a871; font-weight: 700; }
.count { margin-left: auto; }
.view { display: flex; align-items: center; padding-left: 85px; padding-right: 19px; gap: 24px; color: #6b6b6b; }
.view svg { width: 20px; height: 20px; stroke-width: 2; }
.view .step svg { width: 13px; height: 13px; stroke-width: 1; }
.view .step { margin: 0 -8px 0 -2px; width: 13px; }
.view .in { margin: 0 -9px 0 -7px; }
.view .caret { width: 8px; height: 6px; margin-left: 11px; }
.percent { width: 50px; margin-right: -4px; }
.zoom { appearance: none; width: 113px; height: 16px; margin: 0 -9px; background: linear-gradient(#999, #999) center / 100% 2px no-repeat; }
.zoom::-webkit-slider-thumb { appearance: none; width: 7px; height: 16px; background: #fff; border: 1px solid #777; }
```
